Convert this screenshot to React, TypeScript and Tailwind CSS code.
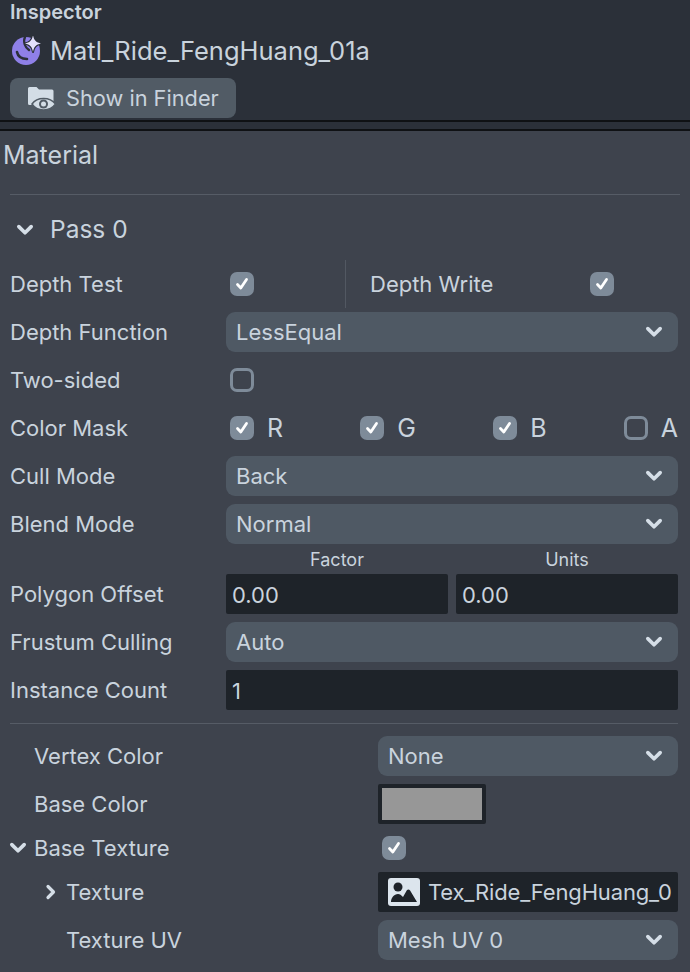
import { ReactNode } from 'react';

const Chevron = ({ className = 'w-4 h-4' }: { className?: string }) => (
  <svg viewBox="0 0 16 16" className={className} fill="none" stroke="currentColor" strokeWidth="3.2" strokeLinecap="round" strokeLinejoin="round">
    <path d="M2.5 5 8 10.5 13.5 5" />
  </svg>
);

const Check = ({ checked = true }: { checked?: boolean }) =>
  checked ? (
    <span className="flex h-6 w-6 items-center justify-center rounded-[7px] bg-[#7e8b99]">
      <svg viewBox="0 0 16 16" className="h-4 w-4" fill="none" stroke="#ffffff" strokeWidth="2.8" strokeLinecap="round" strokeLinejoin="round">
        <path d="M3.5 8.5 6.8 12 12.5 3.5" />
      </svg>
    </span>
  ) : (
    <span className="block h-6 w-6 rounded-[7px] border-[3px] border-[#7e8b99]" />
  );

const Select = ({ value, className = '' }: { value: string; className?: string }) => (
  <div className={`flex h-10 items-center justify-between rounded-[9px] bg-[#4f5964] pl-[10px] pr-[15px] ${className}`}>
    <span>{value}</span>
    <Chevron className="h-[18px] w-[18px] text-[#d5dee7]" />
  </div>
);

const Input = ({ value, className = '' }: { value: string; className?: string }) => (
  <div className={`flex h-10 items-center rounded-[2px] bg-[#1e2329] pl-[6px] pt-[2px] ${className}`}>{value}</div>
);

const Row = ({ label, children }: { label: string; children: ReactNode }) => (
  <div className="flex h-10 items-center">
    <div className="w-[226px] shrink-0">{label}</div>
    <div className="min-w-0 flex-1">{children}</div>
  </div>
);

const SubRow = ({ label, indent, arrow, height = 'h-10', children }: { label: string; indent: string; arrow?: ReactNode; height?: string; children: ReactNode }) => (
  <div className={`flex items-center ${height}`}>
    <div className={`flex w-[378px] shrink-0 items-center ${indent}`}>
      {arrow}
      <span>{label}</span>
    </div>
    <div className="min-w-0 flex-1">{children}</div>
  </div>
);

export default function App() {
  return (
    <div className="h-[972px] w-[690px] overflow-hidden bg-[#3e434d] text-[22px] leading-none text-[#c9d3dd] [font-family:Inter,sans-serif]">
      {/* Header */}
      <div className="h-[120px] bg-[#2b3039] pl-[10px]">
        <div className="pt-[2px] text-[20px] leading-[20px] font-semibold">Inspector</div>
        <div className="mt-[13px] flex h-[32px] items-center gap-[9px] text-[25.5px]">
          <svg viewBox="0 0 30 30" className="ml-[1px] h-[30px] w-[30px]">
            <circle cx="15" cy="15" r="14" fill="#8f80e8" />
            <path d="M6 16c1 5 5 7 10 7" fill="none" stroke="#2b3039" strokeWidth="2.6" strokeLinecap="round" />
            <path d="M14 1c-2 5 0 10 4 13" fill="none" stroke="#2b3039" strokeWidth="2.4" strokeLinecap="round" />
            <path d="M22 -1c.8 5 3 7.600 8 8.500-5 .9-7.200 3.500-8 8.500-.8-5-3-7.600-8-8.500 5-.9 7.200-3.500 8-8.500z" fill="#e3e0fb" stroke="#2b3039" strokeWidth="2" strokeLinejoin="round" paintOrder="stroke" />
          </svg>
          <span>Matl_Ride_FengHuang_01a</span>
        </div>
        <div className="mt-[11px] flex h-10 w-[226px] items-center gap-[10px] rounded-[8px] bg-[#515b65] pl-[18px] pt-[1px] text-[21.75px]">
          <svg viewBox="0 0 28 24" className="h-[24px] w-[28px]">
            <path d="M0 1.500a1.500 1.500 0 0 1 1.500-1.500h7l2.500 2.500h13a1.500 1.500 0 0 1 1.500 1.500v14H1.500a1.500 1.500 0 0 1-1.500-1.500z" fill="#d3dde6" />
            <path d="M4 17c5-7.500 18-7.500 23.500 0-5.500 8-18.500 8-23.500 0z" fill="#d3dde6" stroke="#515b65" strokeWidth="1.500" />
            <circle cx="15.500" cy="17" r="4.500" fill="#515b65" />
            <circle cx="15.500" cy="17" r="2.500" fill="#d3dde6" />
          </svg>
          <span>Show in Finder</span>
        </div>
      </div>
      <div className="h-[11px] border-y-2 border-t-[#0f1114] border-b-[#0f1114] bg-[#2b3039]" />

      {/* Material */}
      <div className="flex h-[48px] items-center pl-[3px] text-[25px]">Material</div>
      <div className="mx-[10px] mt-[15px] h-px bg-[#565c66]" />
      <div className="flex h-[69px] items-center pl-[16px] text-[24.5px]">
        <Chevron className="h-[18px] w-[18px] text-[#d5dee7]" />
        <span className="ml-[16px]">Pass 0</span>
      </div>

      <div className="flex flex-col gap-2 pl-[10px] pr-[12px]">
        <div className="flex h-10 items-center">
          <div className="w-[220px] shrink-0">Depth Test</div>
          <Check />
          <div className="mx-[90px] ml-[91px] h-[48px] w-px bg-[#525862]" />
          <div className="-ml-[66px] w-[220px] shrink-0">Depth Write</div>
          <Check />
        </div>
        <Row label="Depth Function"><Select value="LessEqual" className="-ml-[10px]" /></Row>
        <div className="flex h-10 items-center">
          <div className="w-[220px] shrink-0">Two-sided</div>
          <Check checked={false} />
        </div>
        <div className="flex h-10 items-center">
          <div className="w-[220px] shrink-0">Color Mask</div>
          <div className="flex flex-1 items-center justify-between">
            {[['R', true], ['G', true], ['B', true], ['A', false]].map(([ch, on]) => (
              <div key={ch as string} className="flex items-center gap-[13px] text-[25px]">
                <Check checked={on as boolean} />
                <span>{ch}</span>
              </div>
            ))}
          </div>
        </div>
        <Row label="Cull Mode"><Select value="Back" className="-ml-[10px]" /></Row>
        <Row label="Blend Mode"><Select value="Normal" className="-ml-[10px]" /></Row>
      </div>

      <div className="pl-[10px] pr-[12px]">
        <div className="flex h-[30px] items-center pl-[216px] pt-[2px] text-[18px]">
          <div className="w-[222px] text-center">Factor</div>
          <div className="ml-[8px] flex-1 text-center">Units</div>
        </div>
        <div className="flex flex-col gap-2">
          <Row label="Polygon Offset">
            <div className="-ml-[10px] flex gap-2">
              <Input value="0.00" className="flex-1" />
              <Input value="0.00" className="flex-1" />
            </div>
          </Row>
          <Row label="Frustum Culling"><Select value="Auto" className="-ml-[10px]" /></Row>
          <Row label="Instance Count"><Input value="1" className="-ml-[10px]" /></Row>
        </div>
        <div className="mt-[13px] mb-[12px] h-px bg-[#565c66]" />
        <div className="flex flex-col gap-2">
          <SubRow label="Vertex Color" indent="pl-[24px]"><Select value="None" className="-ml-[10px]" /></SubRow>
          <SubRow label="Base Color" indent="pl-[24px]">
            <div className="-ml-[10px] h-10 w-[108px] rounded-[2px] border-4 border-[#1e2329] bg-[#979797]" />
          </SubRow>
          <SubRow label="Base Texture" indent="" height="h-8" arrow={<Chevron className="mr-[7px] -ml-[1px] h-[18px] w-[18px] text-[#d5dee7]" />}>
            <div className="-ml-[6px]"><Check /></div>
          </SubRow>
          <SubRow
            label="Texture"
            indent="pl-[33px]"
            arrow={
              <svg viewBox="0 0 16 16" className="mr-[7px] h-4 w-4 text-[#d5dee7]" fill="none" stroke="currentColor" strokeWidth="3.200" strokeLinecap="round" strokeLinejoin="round">
                <path d="M5 2.500 10.500 8 5 13.500" />
              </svg>
            }
          >
            <div className="-ml-[10px] flex h-10 items-center overflow-hidden rounded-[2px] bg-[#1e2329] pl-[10px]">
              <svg viewBox="0 0 32 28" className="h-[28px] w-[32px] shrink-0">
                <rect width="32" height="28" rx="3" fill="#dce5ed" />
                <circle cx="10" cy="9" r="4.500" fill="#1e2329" />
                <path d="M3 24c0-4 3-8 7-8 2 0 3 1 5 3l4-7c2-1.500 3 0 4 2l6 10z" fill="#1e2329" />
              </svg>
              <span className="ml-[8px] whitespace-nowrap tracking-[-0.15px]">Tex_Ride_FengHuang_0</span>
            </div>
          </SubRow>
          <SubRow label="Texture UV" indent="pl-[56px]"><Select value="Mesh UV 0" className="-ml-[10px]" /></SubRow>
        </div>
      </div>
    </div>
  );
}
